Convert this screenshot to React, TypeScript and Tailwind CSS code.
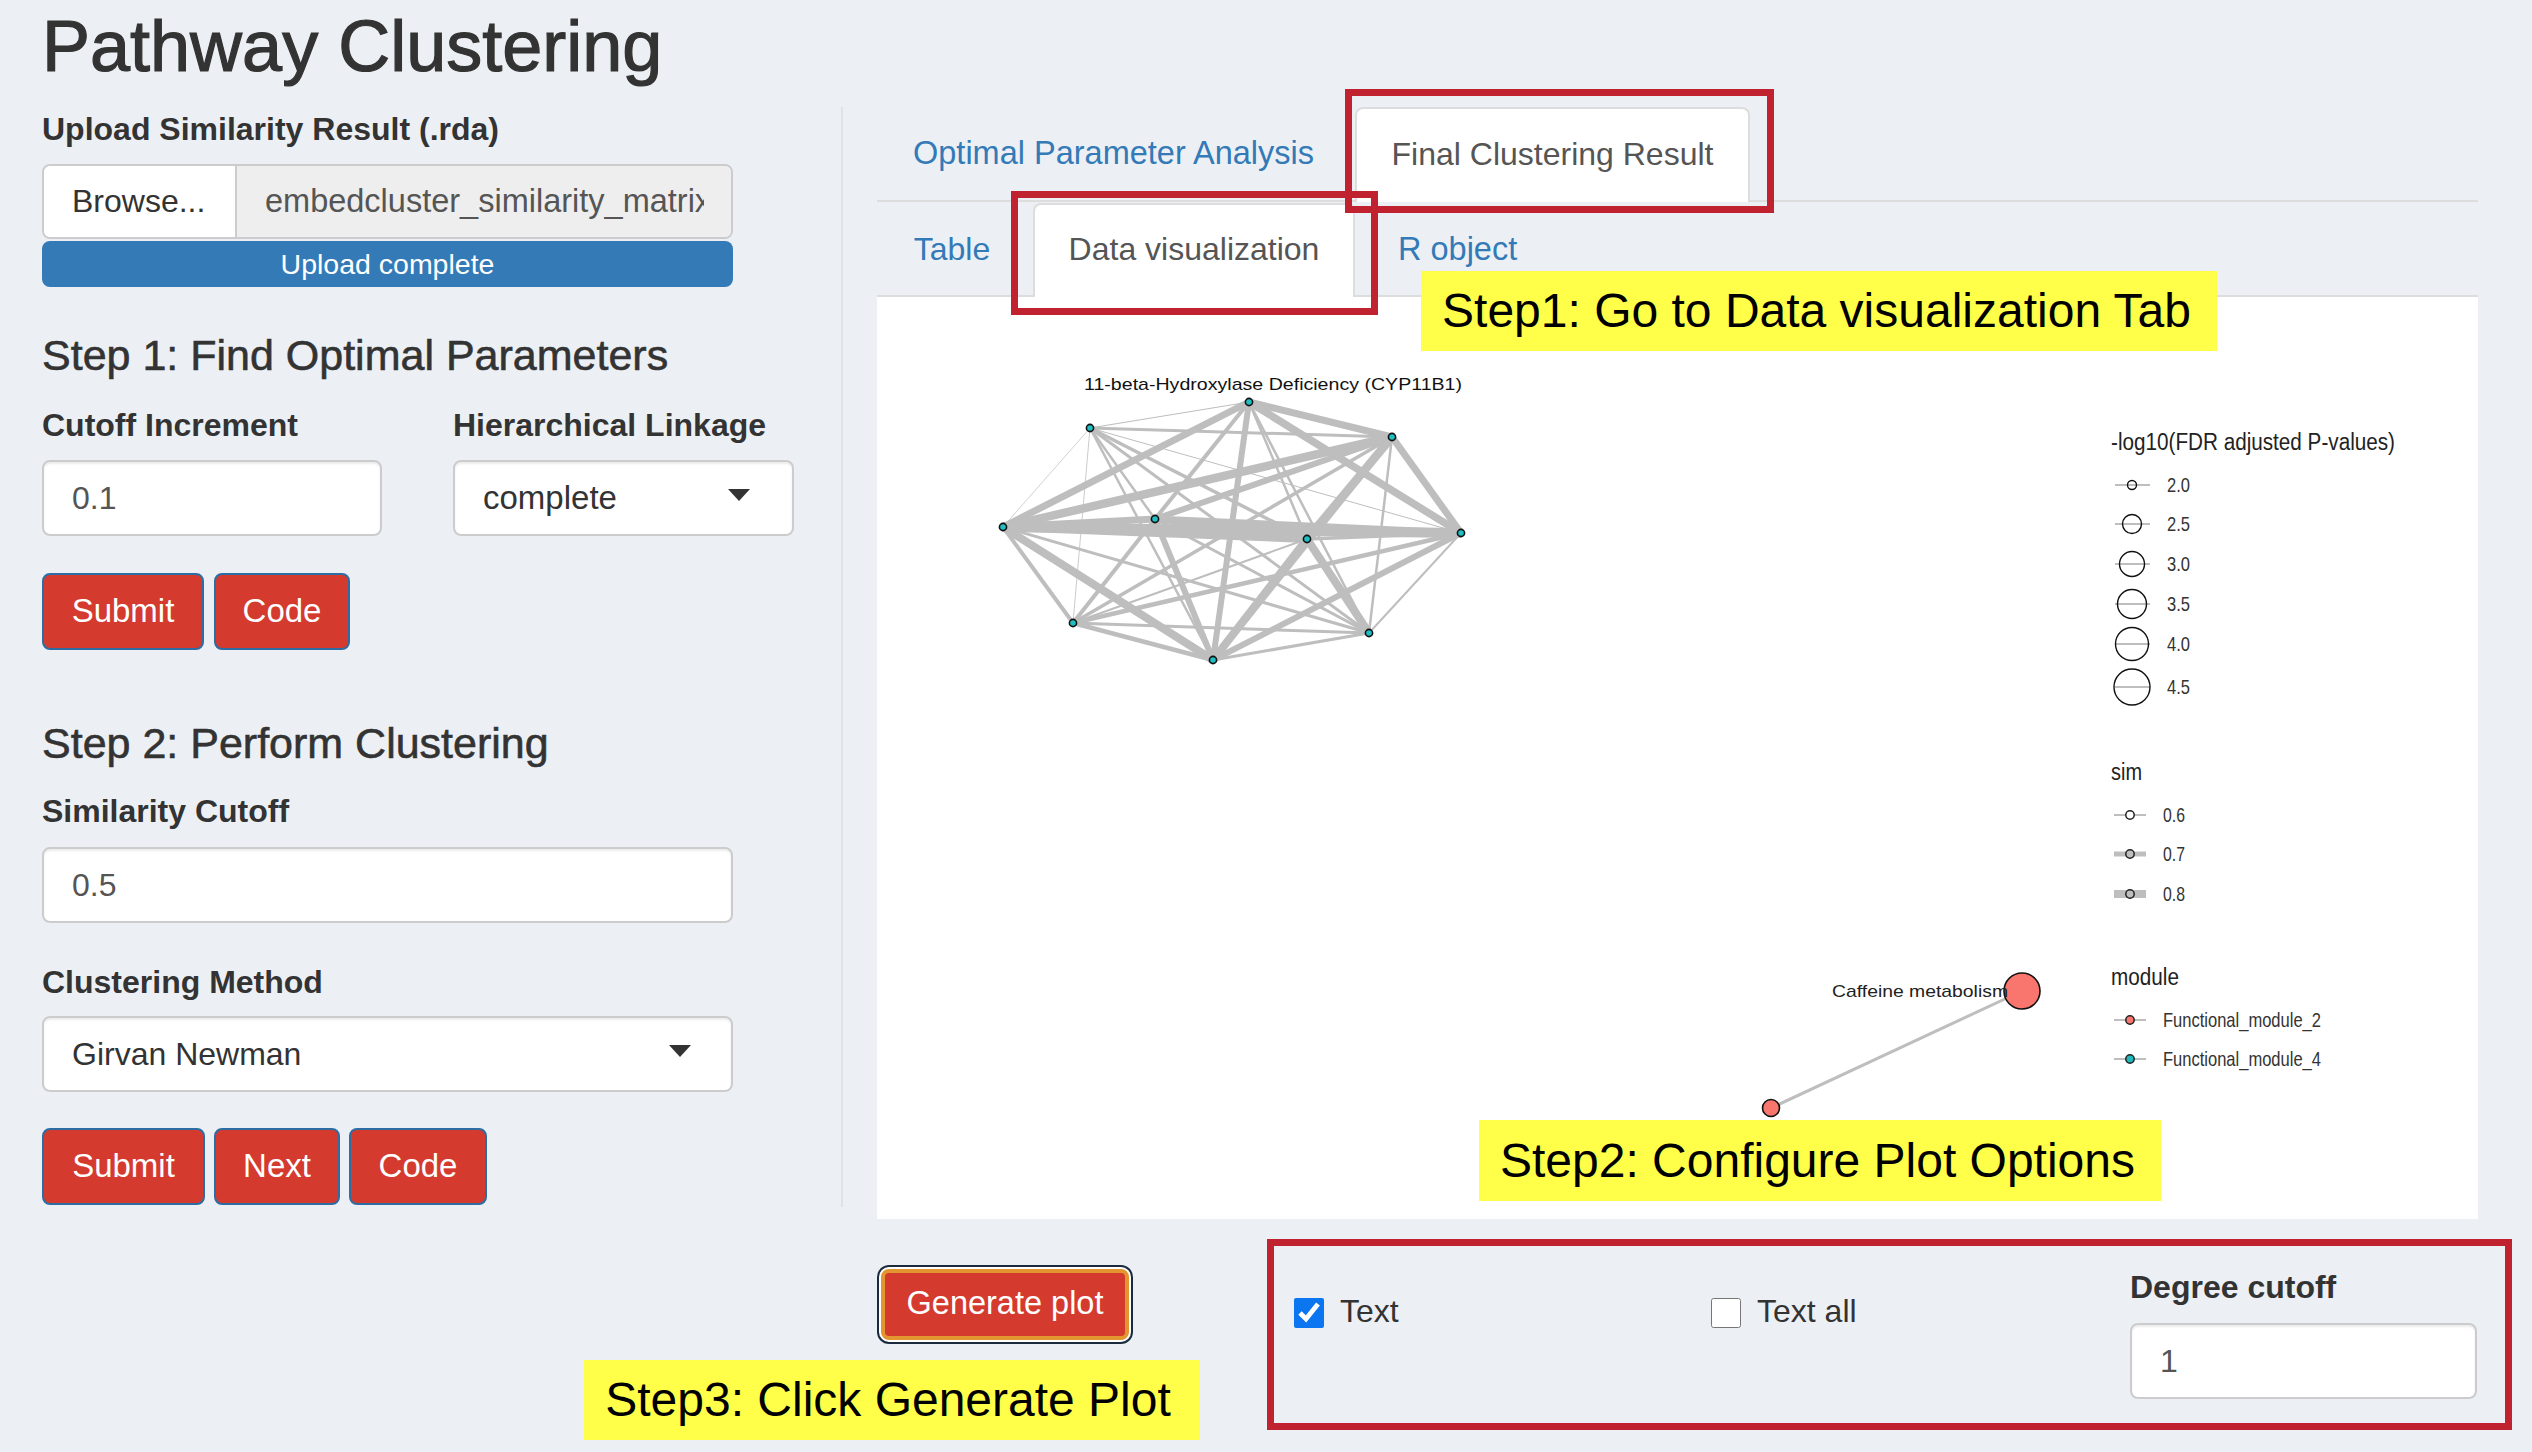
import React from "react";

type Node = { x: number; y: number };

const nodes: Record<string, Node> = {
  A: { x: 1090, y: 428 },
  B: { x: 1249, y: 402 },
  C: { x: 1392, y: 437 },
  D: { x: 1003, y: 527 },
  E: { x: 1155, y: 519 },
  F: { x: 1307, y: 539 },
  G: { x: 1461, y: 533 },
  H: { x: 1073, y: 623 },
  I: { x: 1213, y: 660 },
  J: { x: 1369, y: 633 },
};

// [from, to, stroke width]
const edges: [string, string, number][] = [
  ["A", "B", 1], ["A", "C", 3], ["A", "D", 0.7], ["A", "E", 2.5], ["A", "F", 3.5], ["A", "G", 1], ["A", "H", 0.8], ["A", "I", 2.5], ["A", "J", 3],
  ["B", "C", 7], ["B", "D", 7], ["B", "E", 4], ["B", "F", 2.5], ["B", "G", 7.5], ["B", "I", 6], ["B", "J", 2.5],
  ["C", "D", 8.5], ["C", "E", 6], ["C", "F", 8.5], ["C", "G", 7], ["C", "H", 3.5], ["C", "I", 6.5], ["C", "J", 2.5],
  ["D", "E", 7], ["D", "F", 8], ["D", "G", 10], ["D", "H", 4], ["D", "I", 8], ["D", "J", 3],
  ["E", "F", 7], ["E", "G", 7], ["E", "H", 4], ["E", "I", 6], ["E", "J", 3],
  ["F", "G", 3.5], ["F", "H", 2], ["F", "I", 8], ["F", "J", 8],
  ["G", "H", 4.5], ["G", "I", 6], ["G", "J", 2],
  ["H", "I", 4.5], ["H", "J", 3],
  ["I", "J", 3],
];

const pvalues = [
  { y: 485, r: 4.5, label: "2.0" },
  { y: 524, r: 9.5, label: "2.5" },
  { y: 564, r: 12.5, label: "3.0" },
  { y: 604, r: 14.5, label: "3.5" },
  { y: 644, r: 16.5, label: "4.0" },
  { y: 687, r: 18, label: "4.5" },
];

function Plot() {
  return (
    <svg viewBox="877 297 1601 922" className="block w-full h-full">
      {edges.map(([a, b, w]) => (
        <line key={a + b} x1={nodes[a].x} y1={nodes[a].y} x2={nodes[b].x} y2={nodes[b].y} stroke="#bebebe" strokeWidth={w} />
      ))}
      {Object.entries(nodes).map(([k, n]) => (
        <circle key={k} cx={n.x} cy={n.y} r={3.6} fill="#1fbfc4" stroke="#111" strokeWidth={1.6} />
      ))}
      <text x={1084} y={390} fontSize={17} fill="#111" textLength={378} lengthAdjust="spacingAndGlyphs">
        11-beta-Hydroxylase Deficiency (CYP11B1)
      </text>

      {/* small module */}
      <line x1={2022} y1={991} x2={1771} y2={1108} stroke="#bebebe" strokeWidth={3} />
      <circle cx={2022} cy={991} r={18} fill="#f8766d" stroke="#111" strokeWidth={1.6} />
      <circle cx={1771} cy={1108} r={8.5} fill="#f8766d" stroke="#111" strokeWidth={1.6} />
      <text x={1832} y={997} fontSize={17} fill="#222" textLength={176} lengthAdjust="spacingAndGlyphs">
        Caffeine metabolism
      </text>

      {/* legend */}
      <text x={2111} y={450} fontSize={23} fill="#222" textLength={284} lengthAdjust="spacingAndGlyphs">
        -log10(FDR adjusted P-values)
      </text>
      {pvalues.map((p) => (
        <g key={p.label}>
          <line x1={2115} y1={p.y} x2={2150} y2={p.y} stroke="#bebebe" strokeWidth={2} />
          <circle cx={2132} cy={p.y} r={p.r} fill="none" stroke="#111" strokeWidth={1.4} />
          <text x={2167} y={p.y + 7} fontSize={21} fill="#333" textLength={23} lengthAdjust="spacingAndGlyphs">
            {p.label}
          </text>
        </g>
      ))}

      <text x={2111} y={780} fontSize={23} fill="#222" textLength={31} lengthAdjust="spacingAndGlyphs">
        sim
      </text>
      {[
        { y: 815, w: 2, label: "0.6", fill: "white" },
        { y: 854, w: 5, label: "0.7", fill: "#bebebe" },
        { y: 894, w: 8, label: "0.8", fill: "#bebebe" },
      ].map((s) => (
        <g key={s.label}>
          <line x1={2114} y1={s.y} x2={2146} y2={s.y} stroke="#bebebe" strokeWidth={s.w} />
          <circle cx={2130} cy={s.y} r={4.2} fill={s.fill} stroke="#222" strokeWidth={1.5} />
          <text x={2163} y={s.y + 7} fontSize={21} fill="#333" textLength={22} lengthAdjust="spacingAndGlyphs">
            {s.label}
          </text>
        </g>
      ))}

      <text x={2111} y={985} fontSize={23} fill="#222" textLength={68} lengthAdjust="spacingAndGlyphs">
        module
      </text>
      {[
        { y: 1020, fill: "#f8766d", label: "Functional_module_2" },
        { y: 1059, fill: "#1fb8bd", label: "Functional_module_4" },
      ].map((m) => (
        <g key={m.label}>
          <line x1={2114} y1={m.y} x2={2146} y2={m.y} stroke="#bebebe" strokeWidth={2} />
          <circle cx={2130} cy={m.y} r={4.2} fill={m.fill} stroke="#222" strokeWidth={1.5} />
          <text x={2163} y={m.y + 7} fontSize={21} fill="#333" textLength={158} lengthAdjust="spacingAndGlyphs">
            {m.label}
          </text>
        </g>
      ))}
    </svg>
  );
}

function Caret() {
  return (
    <svg width="22" height="12" viewBox="0 0 22 12" className="block mb-[6px]">
      <path d="M0 0h22L11 12z" fill="#333" />
    </svg>
  );
}

function RedButton({ label, width }: { label: string; width: string }) {
  return (
    <button className={`${width} h-[77px] pb-[2px] rounded-lg bg-[#d43a2e] border-2 border-[#2e6da4] text-white text-[33px]`}>
      {label}
    </button>
  );
}

const Field = "h-[76px] pb-[1px] rounded-lg border-2 border-[#ccc] bg-white flex items-center shadow-[inset_0_2px_2px_rgba(0,0,0,0.08)]";
const Label = "block h-[36px] leading-[36px] text-[32px] font-bold";
const Heading = "h-[50px] leading-[50px] text-[43px] [-webkit-text-stroke:0.6px_#333]";
const Callout = "absolute bg-[#ffff4a] text-black text-[48px] flex items-center justify-center whitespace-nowrap";

export default function App() {
  return (
    <div className="relative w-[2532px] h-[1452px] overflow-hidden bg-[#ecf0f5] text-[#333] font-['Liberation_Sans',Arial,sans-serif]">
      <h1 className="h-[107px] pl-[42px] pt-[11px] text-[72px] leading-[70px] [-webkit-text-stroke:1.2px_#333]">
        Pathway Clustering
      </h1>

      <div className="flex items-start">
        {/* sidebar */}
        <aside className="w-[843px] h-[1100px] pl-[42px] pt-[4px] border-r-2 border-[#dfe3e8]">
          <div className="w-[691px]">
            <label className={Label}>Upload Similarity Result (.rda)</label>
            <div className="mt-[17px] h-[75px] flex rounded-lg border-2 border-[#ccc] overflow-hidden text-[32px]">
              <div className="w-[193px] pb-[1px] bg-white border-r-2 border-[#ccc] flex items-center pl-[28px]">Browse...</div>
              <div className="flex-1 min-w-0 pb-[1px] bg-[#eeeeee] flex items-center pl-[28px] pr-[27px] text-[#555] text-[32.5px]">
                <span className="block overflow-hidden whitespace-nowrap">embedcluster_similarity_matrix.rda</span>
              </div>
            </div>
            <div className="mt-[2px] h-[46px] rounded-lg bg-[#337ab7] text-white text-[28.5px] flex items-center justify-center">
              Upload complete
            </div>
          </div>

          <h3 className={`mt-[43px] ${Heading}`}>Step 1: Find Optimal Parameters</h3>
          <div className="mt-[27px] flex gap-[71px]">
            <div className="w-[340px]">
              <label className={Label}>Cutoff Increment</label>
              <div className={`mt-[17px] pl-[28px] text-[32px] text-[#555] ${Field}`}>0.1</div>
            </div>
            <div className="w-[341px]">
              <label className={Label}>Hierarchical Linkage</label>
              <div className={`mt-[17px] pl-[28px] pr-[42px] justify-between text-[33px] ${Field}`}>
                complete
                <Caret />
              </div>
            </div>
          </div>
          <div className="mt-[37px] flex gap-[10px]">
            <RedButton label="Submit" width="w-[162px]" />
            <RedButton label="Code" width="w-[136px]" />
          </div>

          <h3 className={`mt-[68px] ${Heading}`}>Step 2: Perform Clustering</h3>
          <div className="w-[691px]">
            <label className={`mt-[25px] ${Label}`}>Similarity Cutoff</label>
            <div className={`mt-[18px] pl-[28px] text-[32px] text-[#555] ${Field}`}>0.5</div>
            <label className={`mt-[41px] ${Label}`}>Clustering Method</label>
            <div className={`mt-[16px] pl-[28px] pr-[40px] justify-between text-[32px] ${Field}`}>
              Girvan Newman
              <Caret />
            </div>
          </div>
          <div className="mt-[36px] flex gap-[9px]">
            <RedButton label="Submit" width="w-[163px]" />
            <RedButton label="Next" width="w-[126px]" />
            <RedButton label="Code" width="w-[138px]" />
          </div>
        </aside>

        {/* results */}
        <main className="ml-[34px] w-[1601px]">
          <div className="flex h-[95px] border-b-2 border-[#dddddd] text-[32.5px]">
            <a className="w-[473px] mr-[5px] flex items-center justify-center text-[#337ab7]">Optimal Parameter Analysis</a>
            <a className="w-[395px] h-[95px] pb-[4px] flex items-center justify-center bg-white border-2 border-b-0 border-[#dddddd] rounded-t-lg text-[#555] text-[32px]">
              Final Clustering Result
            </a>
          </div>
          <div className="flex h-[94px] mt-[1px] border-b-2 border-[#dddddd] text-[32.5px]">
            <a className="w-[150px] mr-[6px] flex items-center justify-center text-[#337ab7] text-[32px]">Table</a>
            <a className="w-[322px] h-[94px] pb-[4px] flex items-center justify-center bg-white border-2 border-b-0 border-[#dddddd] rounded-t-lg text-[#555] text-[32px]">
              Data visualization
            </a>
            <a className="ml-[43px] flex items-center text-[#337ab7]">R object</a>
          </div>
          <div className="h-[922px] bg-white">
            <Plot />
          </div>

          <div className="flex items-start">
            <button className="ml-[4px] mt-[50px] w-[248px] h-[71px] pb-[2px] rounded-lg bg-[#d43a2e] border-[4px] border-[#e39530] text-white text-[32.5px] shadow-[0_0_0_2px_white,0_0_0_4px_#1b2a3d]">
              Generate plot
            </button>
            <label className="ml-[165px] mt-[79px] w-[417px] h-[30px] leading-none flex items-start gap-[16px] text-[32px]">
              <input type="checkbox" defaultChecked className="w-[30px] h-[30px] m-0 shrink-0 accent-[#0b76ef]" />
              <span className="-mt-[3px]">Text</span>
            </label>
            <label className="mt-[79px] w-[419px] h-[30px] leading-none flex items-start gap-[16px] text-[32px]">
              <input type="checkbox" className="w-[30px] h-[30px] m-0 shrink-0" />
              <span className="-mt-[3px]">Text all</span>
            </label>
            <div className="mt-[50px] w-[347px] shrink-0">
              <label className={Label}>Degree cutoff</label>
              <div className={`mt-[18px] pl-[28px] text-[32px] text-[#555] ${Field}`}>1</div>
            </div>
          </div>
        </main>
      </div>

      {/* tutorial annotations */}
      <div className="absolute left-[1345px] top-[89px] w-[429px] h-[124px] border-[7px] border-[#c0232f]" />
      <div className="absolute left-[1011px] top-[191px] w-[367px] h-[124px] border-[7px] border-[#c0232f]" />
      <div className="absolute left-[1267px] top-[1239px] w-[1245px] h-[191px] border-[7px] border-[#c0232f]" />
      <div className={`${Callout} pr-[5px] left-[1421px] top-[271px] w-[796px] h-[80px]`}>Step1: Go to Data visualization Tab</div>
      <div className={`${Callout} pr-[5px] left-[1479px] top-[1120px] w-[682px] h-[81px]`}>Step2: Configure Plot Options</div>
      <div className={`${Callout} pr-[8px] left-[584px] top-[1360px] w-[616px] h-[80px]`}>Step3: Click Generate Plot</div>
    </div>
  );
}
